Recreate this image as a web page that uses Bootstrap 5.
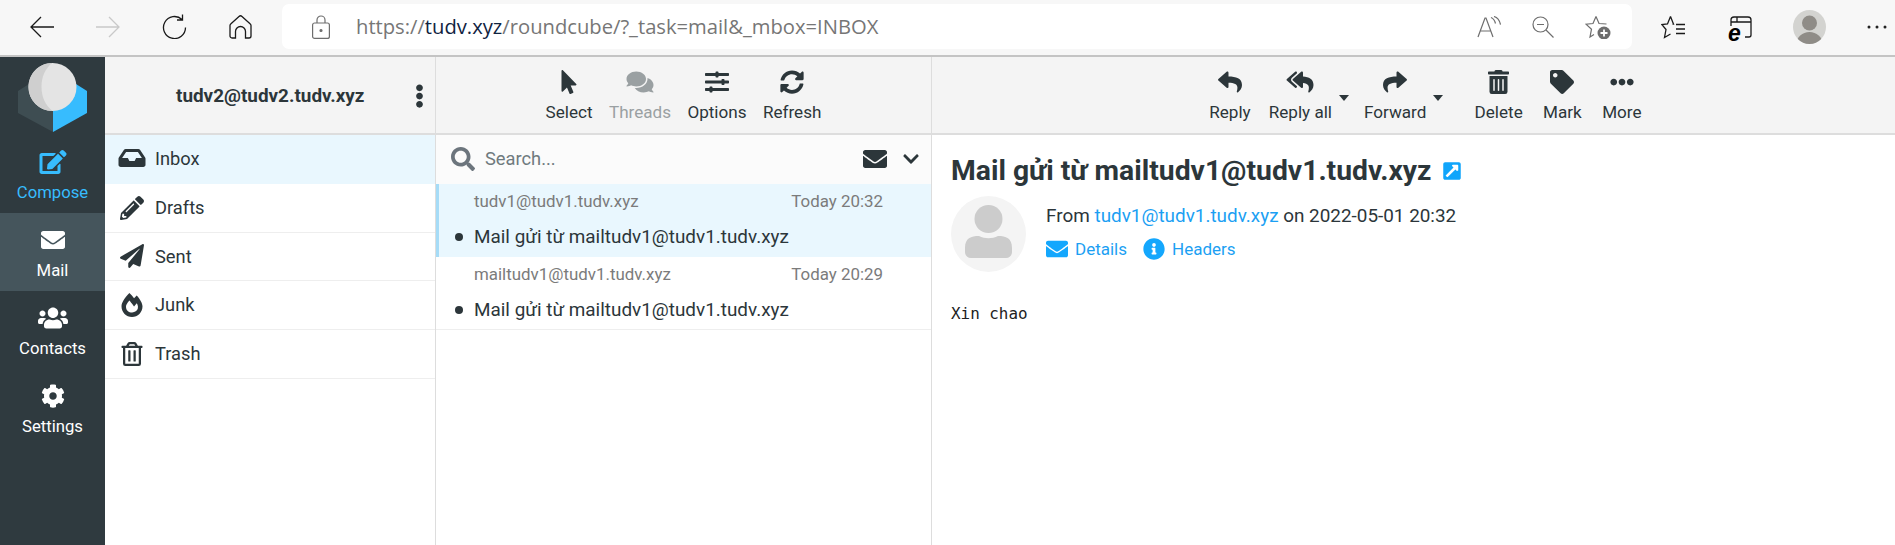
<!DOCTYPE html>
<html lang="en">
<head>
<meta charset="UTF-8">
<title>Roundcube Webmail :: Mail gửi từ mailtudv1@tudv1.tudv.xyz</title>
<link href="https://cdn.jsdelivr.net/npm/bootstrap@5.3.2/dist/css/bootstrap.min.css" rel="stylesheet">
<style>
    html, body { height: 100%; }
    body { font-family: Roboto, sans-serif; font-size: 18.3px; color: #2c363a; background: #fff; overflow: hidden; }
    svg { fill: currentColor; display: block; }

    /* browser chrome */
    .chrome { height: 57px; background: #f7f7f7; border-bottom: 2px solid #c4c4c4; padding: 4px 0 0 9px; flex: none; }
    .chrome-btn { position: relative; width: 66px; height: 45px; color: #1a1a1a; flex-shrink: 0; }
    .chrome-btn svg { fill: none; stroke: currentColor; stroke-width: 1.3; }
    .chrome-btn.off { color: #c9c9c9; }
    .addr { width: 1350px; height: 45px; background: #fff; border-radius: 7px; margin-left: 9px; color: #6e6e6e; flex-shrink: 0; }
    .addr svg { fill: none; stroke: currentColor; stroke-width: 1.2; }
    .addr-lock { margin-left: 30px; flex-shrink: 0; }
    .addr-text { font-family: "Open Sans", sans-serif; font-size: 20.2px; margin-left: 26px; color: #767676; white-space: nowrap; }
    .addr-text b { font-weight: 400; color: #10233f; }
    .addr-end { gap: 31px; padding-right: 21px; }
    .chrome-tools { height: 45px; margin-left: 7px; flex-shrink: 0; }
    .chrome-tools .chrome-btn { width: 68px; }
    .ie-letter { position: absolute; left: 21px; top: 18px; font: italic 700 23px/1 "Liberation Sans", sans-serif; color: #000; }
    .chrome-user { width: 33px; height: 34px; border-radius: 50%; background: #d3d3d0; overflow: hidden; }

    /* left menu */
    .side { width: 105px; flex: none; background: #2f3a3f; color: #fff; }
    .side-logo { height: 78px; padding: 6px 0 0 18px; }
    .side-item { height: 78px; padding-top: 3px; font-size: 16.7px; color: #fff; text-decoration: none; line-height: 1; }
    .side-item svg { margin-bottom: 11px; }
    .side-item.blue { color: #37bcfe; }
    .side-item.on { background: #45555c; }

    /* columns */
    .col-folders { width: 331px; flex: none; border-right: 1px solid #ddd; }
    .col-list { width: 496px; flex: none; border-right: 1px solid #ddd; }
    .col-mail { flex: 1; min-width: 0; }
    .head-bar { height: 78px; background: #f4f4f4; border-bottom: 2px solid #ddd; flex: none; padding-top: 2px; }

    .account { font-weight: 700; font-size: 18.9px; padding-left: 71px; }
    .dots { margin-left: 51px; }
    .folder-row { height: 48.75px; padding-left: 13px; border-bottom: 1px solid #eee; }
    .folder-row svg { width: 28px; margin-right: 9px; flex: none; }
    .folder-row.on { background: #e9f7fe; border-bottom: 0; padding-bottom: 2px; }

    .tool-btn { padding: 0 9px; font-size: 17.1px; line-height: 1; color: #2c363a; position: relative; }
    .tool-btn svg { height: 24px; margin-bottom: 10px; }
    .tool-btn.off { color: #9aa0a2; }
    .tool-btn.split { padding-right: 23px; }
    .tool-btn.wide { padding: 0 10.2px; }
    .tool-caret { position: absolute; right: 6px; top: 25px; border: 5.5px solid transparent; border-top: 6px solid #2c363a; border-bottom: 0; }
    .list-tools .tool-btn { padding: 0 8.2px; }
    .mail-tools { padding-left: 25px; }
    .tool-sep { width: 15px; }

    .search-row { height: 49px; background: #fbfbfb; padding: 0 12px 2px 15px; color: #2c363a; }
    .search-row input { border: 0; background: transparent; padding: 0; margin-left: 10px; font-size: 18.3px; flex: 1; outline: 0; min-width: 0; }
    .search-row input::placeholder { color: #6f7a7e; opacity: 1; }
    .msg-row { height: 73px; border-bottom: 1px solid #eee; padding: 0 48px 0 38px; position: relative; }
    .msg-row.on { background: #e9f7fe; border-bottom: 0; box-shadow: inset 3px 0 0 #a6dcf7; }
    .msg-top { font-size: 16.9px; color: #7b7b7b; padding-top: 7px; line-height: 20px; }
    .msg-subject { font-size: 18.9px; padding-top: 14px; line-height: 23px; color: #2c363a; }
    .msg-dot { position: absolute; left: 19px; top: 49px; width: 8px; height: 8px; border-radius: 50%; background: #2c363a; }

    .mail-body { padding: 19px 19px; }
    .mail-title { font-size: 28.3px; font-weight: 700; line-height: 34px; margin: 0; color: #2c363a; }
    .mail-title svg { width: 18px; color: #10a5fb; margin-left: 11px; }
    .sender-photo { width: 75px; height: 76px; border-radius: 50%; background: #f4f4f4; overflow: hidden; color: #ccc; flex: none; }
    .sender-info { padding-left: 20px; padding-top: 8px; font-size: 18.9px; line-height: 24px; }
    .blue-link { color: #1c9ff3; text-decoration: none; }
    .mail-links { margin-top: 9px; font-size: 17px; }
    .mail-links svg { margin-right: 7px; color: #14a7fd; }
    .mail-text { font-family: "DejaVu Sans Mono", monospace; font-size: 15.9px; margin-top: 32px; line-height: 20px; color: #222; }
</style>
</head>
<body class="d-flex flex-column">

<svg width="0" height="0" class="position-absolute">
    <symbol id="i-envelope" viewBox="0 0 512 512"><path d="M502.3 190.8c3.9-3.1 9.7-.2 9.7 4.7V400c0 26.5-21.5 48-48 48H48c-26.5 0-48-21.5-48-48V195.6c0-5 5.7-7.8 9.7-4.7 22.4 17.4 52.1 39.5 154.1 113.6 21.1 15.4 56.7 47.8 92.2 47.6 35.7.3 72-32.8 92.3-47.6 102-74.1 131.6-96.3 154-113.7zM256 320c23.2.4 56.6-29.2 73.4-41.4 132.7-96.3 142.8-104.7 173.4-128.7 5.8-4.5 9.2-11.5 9.2-18.9v-19c0-26.5-21.5-48-48-48H48C21.5 64 0 85.5 0 112v19c0 7.4 3.4 14.3 9.2 18.9 30.6 23.9 40.7 32.4 173.4 128.7 16.8 12.2 50.2 41.8 73.4 41.4z"/></symbol>
    <symbol id="i-reply" viewBox="0 0 512 512"><path d="M8.309 189.836L184.313 37.851C199.719 24.546 224 35.347 224 56.015v80.053c160.629 1.839 288 34.032 288 186.258 0 61.441-39.581 122.309-83.333 154.132-13.653 9.931-33.111-2.533-28.077-18.631 45.344-145.012-21.507-183.51-176.59-185.742V360c0 20.7-24.3 31.453-39.687 18.164l-176.004-152c-11.071-9.562-11.086-26.753 0-36.328z"/></symbol>
    <symbol id="i-reply-all" viewBox="0 0 576 512"><path d="M136.309 189.836L312.313 37.851C327.72 24.546 352 35.348 352 56.015v82.763c129.182 10.231 224 52.212 224 183.548 0 61.441-39.582 122.309-83.333 154.132-13.653 9.931-33.111-2.533-28.077-18.631 38.512-123.162-3.922-169.482-112.59-182.015V360c0 20.7-24.3 31.453-39.687 18.164l-176.004-152c-11.071-9.561-11.086-26.753 0-36.328zm-128 36.328L184.313 378.15C199.7 391.439 224 380.687 224 359.986v-15.818l-108.606-93.785A55.96 55.96 0 0 1 96 207.998a55.953 55.953 0 0 1 19.393-42.38L224 71.832V56.015c0-20.667-24.28-31.469-39.687-18.164L8.309 189.836c-11.086 9.575-11.071 26.767 0 36.328z"/></symbol>
    <symbol id="i-share" viewBox="0 0 512 512"><path d="M503.691 189.836L327.687 37.851C312.281 24.546 288 35.347 288 56.015v80.053C127.371 137.907 0 170.1 0 322.326c0 61.441 39.581 122.309 83.333 154.132 13.653 9.931 33.111-2.533 28.077-18.631C66.066 312.814 132.917 274.316 288 272.085V360c0 20.7 24.3 31.453 39.687 18.164l176.004-152c11.071-9.562 11.086-26.753 0-36.328z"/></symbol>
    <symbol id="i-trash" viewBox="0 0 448 512"><path d="M32 464a48 48 0 0 0 48 48h288a48 48 0 0 0 48-48V128H32zm272-256a16 16 0 0 1 32 0v224a16 16 0 0 1-32 0zm-96 0a16 16 0 0 1 32 0v224a16 16 0 0 1-32 0zm-96 0a16 16 0 0 1 32 0v224a16 16 0 0 1-32 0zM432 32H312l-9.400-18.700A24 24 0 0 0 281.100 0H166.800a23.720 23.720 0 0 0-21.400 13.300L136 32H16A16 16 0 0 0 0 48v32a16 16 0 0 0 16 16h416a16 16 0 0 0 16-16V48a16 16 0 0 0-16-16z"/></symbol>
    <symbol id="i-tag" viewBox="0 0 512 512"><path d="M0 252.118V48C0 21.49 21.49 0 48 0h204.118a48 48 0 0 1 33.941 14.059l211.882 211.882c18.745 18.745 18.745 49.137 0 67.882L293.823 497.941c-18.745 18.745-49.137 18.745-67.882 0L14.059 286.059A48 48 0 0 1 0 252.118zM112 64c-26.51 0-48 21.49-48 48s21.49 48 48 48 48-21.49 48-48-21.49-48-48-48z"/></symbol>
    <symbol id="i-more" viewBox="0 0 512 512"><path d="M328 256c0 39.8-32.2 72-72 72s-72-32.2-72-72 32.2-72 72-72 72 32.2 72 72zm104-72c-39.8 0-72 32.2-72 72s32.2 72 72 72 72-32.2 72-72-32.2-72-72-72zm-352 0c-39.8 0-72 32.2-72 72s32.2 72 72 72 72-32.2 72-72-32.2-72-72-72z"/></symbol>
    <symbol id="i-dots" viewBox="0 0 192 512"><path d="M96 184c39.8 0 72 32.2 72 72s-32.2 72-72 72-72-32.2-72-72 32.2-72 72-72zM24 80c0 39.8 32.2 72 72 72s72-32.2 72-72S135.8 8 96 8 24 40.2 24 80zm0 352c0 39.8 32.2 72 72 72s72-32.2 72-72-32.2-72-72-72-72 32.2-72 72z"/></symbol>
    <symbol id="i-search" viewBox="0 0 512 512"><path d="M505 442.7L405.3 343c-4.5-4.5-10.6-7-17-7H372c27.6-35.3 44-79.7 44-128C416 93.1 322.9 0 208 0S0 93.1 0 208s93.1 208 208 208c48.3 0 92.7-16.4 128-44v16.3c0 6.4 2.5 12.5 7 17l99.7 99.7c9.4 9.4 24.6 9.4 33.9 0l28.3-28.3c9.4-9.4 9.4-24.6.1-34zM208 336c-70.7 0-128-57.2-128-128 0-70.7 57.2-128 128-128 70.7 0 128 57.2 128 128 0 70.7-57.2 128-128 128z"/></symbol>
    <symbol id="i-chevron" viewBox="0 0 448 512"><path d="M207.029 381.476L12.686 187.132c-9.373-9.373-9.373-24.569 0-33.941l22.667-22.667c9.357-9.357 24.522-9.375 33.901-.04L224 284.505l154.745-154.021c9.379-9.335 24.544-9.317 33.901.04l22.667 22.667c9.373 9.373 9.373 24.569 0 33.941L240.971 381.476c-9.373 9.372-24.569 9.372-33.942 0z"/></symbol>
    <symbol id="i-pointer" viewBox="0 0 320 512"><path d="M302.189 329.126H196.105l55.831 135.993c3.889 9.428-.555 19.999-9.444 23.999l-49.165 21.427c-9.165 4-19.443-.571-23.332-9.714l-53.053-129.136-86.664 89.138C18.729 472.71 0 463.554 0 447.977V18.299C0 1.899 19.921-6.096 30.277 5.443l284.412 292.542c11.472 11.179 3.007 31.141-12.5 31.141z"/></symbol>
    <symbol id="i-comments" viewBox="0 0 576 512"><path d="M416 192c0-88.4-93.1-160-208-160S0 103.6 0 192c0 34.3 14.1 65.9 38 92-13.4 30.2-35.5 54.2-35.8 54.5-2.2 2.3-2.8 5.7-1.5 8.7S4.8 352 8 352c36.6 0 66.9-12.3 88.7-25 32.2 15.7 70.3 25 111.3 25 114.9 0 208-71.6 208-160zm122 220c23.9-26 38-57.7 38-92 0-66.9-53.5-124.2-129.3-148.1.9 6.6 1.3 13.3 1.3 20.1 0 105.9-107.7 192-240 192-10.8 0-21.3-.8-31.7-1.9C207.8 439.6 281.8 480 368 480c41 0 79.1-9.2 111.3-25 21.8 12.7 52.1 25 88.7 25 3.2 0 6.1-1.9 7.3-4.8 1.3-2.9.7-6.3-1.5-8.7-.3-.3-22.4-24.2-35.8-54.5z"/></symbol>
    <symbol id="i-sliders" viewBox="0 0 512 512"><path d="M496 384H160v-16c0-8.8-7.2-16-16-16h-32c-8.8 0-16 7.2-16 16v16H16c-8.8 0-16 7.2-16 16v32c0 8.8 7.2 16 16 16h80v16c0 8.8 7.2 16 16 16h32c8.8 0 16-7.2 16-16v-16h336c8.8 0 16-7.2 16-16v-32c0-8.8-7.2-16-16-16zm0-160h-80v-16c0-8.8-7.2-16-16-16h-32c-8.8 0-16 7.2-16 16v16H16c-8.8 0-16 7.2-16 16v32c0 8.8 7.2 16 16 16h336v16c0 8.8 7.2 16 16 16h32c8.8 0 16-7.2 16-16v-16h80c8.8 0 16-7.2 16-16v-32c0-8.8-7.2-16-16-16zm0-160H288V48c0-8.8-7.2-16-16-16h-32c-8.8 0-16 7.2-16 16v16H16C7.2 64 0 71.2 0 80v32c0 8.8 7.2 16 16 16h208v16c0 8.8 7.2 16 16 16h32c8.8 0 16-7.2 16-16v-16h208c8.8 0 16-7.2 16-16V80c0-8.8-7.2-16-16-16z"/></symbol>
    <symbol id="i-sync" viewBox="0 0 512 512"><path d="M370.72 133.28C339.458 104.008 298.888 87.962 255.848 88c-77.458.068-144.328 53.178-162.791 126.85-1.344 5.363-6.122 9.15-11.651 9.15H24.103c-7.498 0-13.194-6.807-11.807-14.176C33.933 94.924 134.813 8 256 8c66.448 0 126.791 26.136 171.315 68.685L463.03 40.97C478.149 25.851 504 36.559 504 57.941V192c0 13.255-10.745 24-24 24H345.941c-21.382 0-32.09-25.851-16.971-40.971l41.75-41.749zM32 296h134.059c21.382 0 32.09 25.851 16.971 40.971l-41.75 41.75c31.262 29.273 71.835 45.319 114.876 45.28 77.418-.07 144.315-53.144 162.787-126.849 1.344-5.363 6.122-9.15 11.651-9.15h57.304c7.498 0 13.194 6.807 11.807 14.176C478.067 417.076 377.187 504 256 504c-66.448 0-126.791-26.136-171.315-68.685L48.97 471.03C33.851 486.149 8 475.441 8 454.059V320c0-13.255 10.745-24 24-24z"/></symbol>
    <symbol id="i-users" viewBox="0 0 640 512"><path d="M96 224c35.3 0 64-28.7 64-64s-28.7-64-64-64-64 28.7-64 64 28.7 64 64 64zm448 0c35.3 0 64-28.7 64-64s-28.7-64-64-64-64 28.7-64 64 28.7 64 64 64zm32 32h-64c-17.6 0-33.5 7.1-45.1 18.6 40.3 22.1 68.9 62 75.1 109.4h66c17.7 0 32-14.3 32-32v-32c0-35.3-28.7-64-64-64zm-256 0c61.9 0 112-50.1 112-112S381.9 32 320 32 208 82.1 208 144s50.1 112 112 112zm76.8 32h-8.3c-20.8 10-43.9 16-68.5 16s-47.6-6-68.5-16h-8.3C179.6 288 128 339.6 128 403.2V432c0 26.5 21.5 48 48 48h288c26.5 0 48-21.5 48-48v-28.8c0-63.6-51.6-115.2-115.2-115.2zm-223.7-13.4C161.5 263.1 145.6 256 128 256H64c-35.3 0-64 28.7-64 64v32c0 17.7 14.3 32 32 32h65.9c6.3-47.4 34.9-87.3 75.2-109.4z"/></symbol>
    <symbol id="i-cog" viewBox="0 0 512 512"><path d="M487.4 315.7l-42.6-24.6c4.3-23.2 4.3-47 0-70.2l42.6-24.6c4.9-2.8 7.1-8.6 5.5-14-11.1-35.6-30-67.8-54.7-94.6-3.8-4.1-10-5.1-14.8-2.3L380.8 110c-17.9-15.4-38.5-27.3-60.8-35.1V25.8c0-5.6-3.9-10.5-9.4-11.7-36.7-8.2-74.3-7.8-109.2 0-5.5 1.2-9.4 6.1-9.4 11.7V75c-22.2 7.9-42.8 19.8-60.8 35.1L88.7 85.5c-4.9-2.8-11-1.9-14.8 2.3-24.7 26.7-43.6 58.9-54.7 94.6-1.7 5.4.6 11.2 5.5 14L67.3 221c-4.3 23.2-4.3 47 0 70.2l-42.6 24.6c-4.9 2.8-7.1 8.6-5.5 14 11.1 35.6 30 67.8 54.7 94.6 3.8 4.1 10 5.1 14.8 2.3l42.6-24.6c17.9 15.4 38.5 27.3 60.8 35.1v49.2c0 5.6 3.9 10.5 9.4 11.7 36.7 8.2 74.3 7.8 109.2 0 5.5-1.2 9.4-6.1 9.4-11.7v-49.2c22.2-7.9 42.8-19.8 60.8-35.1l42.6 24.6c4.9 2.8 11 1.9 14.8-2.3 24.7-26.7 43.6-58.9 54.7-94.6 1.5-5.5-.7-11.3-5.6-14.1zM256 336c-44.1 0-80-35.9-80-80s35.9-80 80-80 80 35.9 80 80-35.9 80-80 80z"/></symbol>
    <symbol id="i-edit" viewBox="0 0 576 512"><path d="M402.6 83.2l90.2 90.2c3.8 3.8 3.8 10 0 13.8L274.4 405.6l-92.8 10.3c-12.4 1.4-22.9-9.1-21.5-21.5l10.3-92.8L388.8 83.2c3.8-3.8 10-3.8 13.8 0zm162-22.9l-48.8-48.8c-15.2-15.2-39.9-15.2-55.2 0l-35.4 35.4c-3.8 3.8-3.8 10 0 13.8l90.2 90.2c3.8 3.8 10 3.8 13.8 0l35.4-35.4c15.2-15.3 15.2-40 0-55.2zM384 346.2V448H64V128h229.8c3.2 0 6.2-1.3 8.5-3.5l40-40c7.6-7.6 2.2-20.5-8.5-20.5H48C21.5 64 0 85.5 0 112v352c0 26.5 21.5 48 48 48h352c26.5 0 48-21.5 48-48V306.2c0-10.7-12.9-16-20.5-8.5l-40 40c-2.2 2.3-3.5 5.3-3.5 8.5z"/></symbol>
    <symbol id="i-inbox" viewBox="0 0 576 512"><path d="M567.938 243.908L462.25 85.374A48.003 48.003 0 0 0 422.311 64H153.689a48 48 0 0 0-39.938 21.374L8.062 243.908A47.994 47.994 0 0 0 0 270.533V400c0 26.51 21.49 48 48 48h480c26.51 0 48-21.49 48-48V270.533a47.994 47.994 0 0 0-8.062-26.625zM162.252 128h251.497l85.333 128H376l-32 64H232l-32-64H76.918l85.334-128z"/></symbol>
    <symbol id="i-pencil" viewBox="0 0 512 512"><path d="M497.9 142.1l-46.1 46.1c-4.7 4.7-12.3 4.7-17 0l-111-111c-4.7-4.7-4.7-12.3 0-17l46.1-46.1c18.7-18.7 49.1-18.7 67.9 0l60.1 60.1c18.8 18.7 18.8 49.1 0 67.9zM284.2 99.8L21.6 362.4.4 483.9c-2.9 16.4 11.4 30.6 27.8 27.8l121.5-21.3 262.6-262.6c4.7-4.7 4.7-12.3 0-17l-111-111c-4.8-4.7-12.4-4.7-17.1 0zM124.1 339.9c-5.5-5.5-5.5-14.3 0-19.8l154-154c5.5-5.5 14.3-5.5 19.8 0s5.5 14.3 0 19.8l-154 154c-5.5 5.5-14.3 5.5-19.8 0zM88 424h48v36.3l-64.5 11.3-31.1-31.1L51.7 376H88v48z"/></symbol>
    <symbol id="i-plane" viewBox="0 0 512 512"><path d="M476 3.2L12.5 270.6c-18.1 10.4-15.8 35.6 2.2 43.2L121 358.4l287.3-253.2c5.5-4.9 13.3 2.6 8.6 8.3L176 407v80.5c0 23.6 28.5 32.9 42.5 15.8L282 426l124.6 52.2c14.2 6 30.4-2.9 33-18.2l72-432C515 7.8 493.3-6.8 476 3.2z"/></symbol>
    <symbol id="i-fire" viewBox="0 0 448 512"><path d="M323.56 51.2c-20.8 19.3-39.58 39.59-56.22 59.97C240.08 73.62 206.28 35.53 168 0 69.74 91.17 0 209.96 0 281.6 0 408.85 100.29 512 224 512s224-103.15 224-230.4c0-53.27-51.98-163.14-124.44-230.4zm-19.47 340.65C282.43 407.01 255.72 416 226.86 416 154.71 416 96 368.26 96 290.75c0-38.61 24.31-72.63 72.79-130.75 6.93 7.98 98.83 125.34 98.83 125.34l58.63-66.88c4.14 6.85 7.91 13.55 11.27 19.97 27.35 52.19 15.81 118.97-33.43 153.42z"/></symbol>
    <symbol id="i-trash-o" viewBox="0 0 448 512"><path d="M268 416h24a12 12 0 0 0 12-12V188a12 12 0 0 0-12-12h-24a12 12 0 0 0-12 12v216a12 12 0 0 0 12 12zM432 80h-82.41l-34-56.7A48 48 0 0 0 274.41 0H173.59a48 48 0 0 0-41.16 23.3L98.41 80H16A16 16 0 0 0 0 96v16a16 16 0 0 0 16 16h16v336a48 48 0 0 0 48 48h288a48 48 0 0 0 48-48V128h16a16 16 0 0 0 16-16V96a16 16 0 0 0-16-16zM171.84 50.91A6 6 0 0 1 177 48h94a6 6 0 0 1 5.15 2.91L293.61 80H154.39zM368 464H80V128h288zm-212-48h24a12 12 0 0 0 12-12V188a12 12 0 0 0-12-12h-24a12 12 0 0 0-12 12v216a12 12 0 0 0 12 12z"/></symbol>
    <symbol id="i-info" viewBox="0 0 512 512"><path d="M256 8C119.043 8 8 119.083 8 256c0 136.997 111.043 248 248 248s248-111.003 248-248C504 119.083 392.957 8 256 8zm0 110c23.196 0 42 18.804 42 42s-18.804 42-42 42-42-18.804-42-42 18.804-42 42-42zm56 254c0 6.627-5.373 12-12 12h-88c-6.627 0-12-5.373-12-12v-24c0-6.627 5.373-12 12-12h12v-64h-12c-6.627 0-12-5.373-12-12v-24c0-6.627 5.373-12 12-12h64c6.627 0 12 5.373 12 12v100h12c6.627 0 12 5.373 12 12v24z"/></symbol>
    <symbol id="i-external" viewBox="0 0 448 512"><path d="M448 80v352c0 26.51-21.49 48-48 48H48c-26.51 0-48-21.49-48-48V80c0-26.51 21.49-48 48-48h352c26.51 0 48 21.49 48 48zm-88 16H248.029c-21.313 0-32.08 25.861-16.971 40.971l31.984 31.987L67.515 364.485c-4.686 4.686-4.686 12.284 0 16.971l31.029 31.029c4.687 4.686 12.285 4.686 16.971 0l195.526-195.526 31.988 31.991C357.058 263.977 384 253.425 384 231.979V120c0-13.255-10.745-24-24-24z"/></symbol>
</svg>

<!-- browser toolbar -->
<div class="chrome d-flex align-items-start">
    <div class="chrome-btn d-flex align-items-center justify-content-center">
        <svg width="24" height="22" viewBox="0 0 24 22"><path d="M24 11H1M11 1 1 11l10 10"/></svg>
    </div>
    <div class="chrome-btn off d-flex align-items-center justify-content-center">
        <svg width="24" height="22" viewBox="0 0 24 22"><path d="M0 11h23M13 1l10 10-10 10"/></svg>
    </div>
    <div class="chrome-btn d-flex align-items-center justify-content-center">
        <svg width="25" height="25" viewBox="0 0 25 25"><path d="M20 5.500A11 11 0 1 0 23.500 13.500M20.500 .5v5.500H15"/></svg>
    </div>
    <div class="chrome-btn d-flex align-items-center justify-content-center">
        <svg width="23" height="24" viewBox="0 0 23 24"><path d="M3 23a2 2 0 0 1-2-2V10.500a2 2 0 0 1 .7-1.500L10 1.500a2.200 2.200 0 0 1 3 0L21.300 9a2 2 0 0 1 .7 1.500V21a2 2 0 0 1-2 2h-3.500v-6.500a5 5 0 0 0-10 0V23z"/></svg>
    </div>
    <div class="addr d-flex align-items-center">
        <svg class="addr-lock" width="18" height="24" viewBox="0 0 18 24"><rect x=".6" y="8" width="16.800" height="15.400" rx="2"/><path d="M5 8V5a4 4 0 0 1 8 0v3"/><circle cx="9" cy="15.500" r="1" fill="currentColor"/></svg>
        <div class="addr-text">https://<b>tudv.xyz</b>/roundcube/?_task=mail&amp;_mbox=INBOX</div>
        <div class="addr-end d-flex align-items-center ms-auto">
            <svg width="24" height="22" viewBox="0 0 24 22"><path d="M1 21 8 2h1l7 19M3.500 15h10M14 1.500q3.500 1.500 4.500 6M17 .5q5 1.500 6.500 8"/></svg>
            <svg width="22" height="22" viewBox="0 0 22 22"><circle cx="8.500" cy="8.500" r="7.500"/><path d="M5 8.500h7M14 14l7.500 7.500"/></svg>
            <svg width="26" height="24" viewBox="0 0 26 24"><path d="M11 1.500l3 7 7.500.5M11 1.500 8 8.500l-7 .7 5.500 5L5 22l4-2.500"/><circle cx="19" cy="18" r="6.500" fill="currentColor" stroke="none"/><path d="M19 14.500v7M15.500 18h7" stroke="#fff" stroke-width="1.800"/></svg>
        </div>
    </div>
    <div class="chrome-tools d-flex align-items-center">
        <div class="chrome-btn d-flex align-items-center justify-content-center">
            <svg width="25" height="24" viewBox="0 0 25 24"><path d="M9.500 1.500l3 7.500h-1M9.500 1.500 6.500 9 .8 9.500 5 14.500 3.500 22.500 9.500 19M15 9.500h9M15 14h9M15 18.500h9"/></svg>
        </div>
        <div class="chrome-btn d-flex align-items-center justify-content-center">
            <svg width="22" height="22" viewBox="0 0 22 22"><path d="M1 10V4a3 3 0 0 1 3-3h14a3 3 0 0 1 3 3v15a2 2 0 0 1-2 2h-4M1 6h20M7 1v5"/></svg>
            <span class="ie-letter">e</span>
        </div>
        <div class="chrome-btn d-flex align-items-center justify-content-center">
            <div class="chrome-user">
                <svg width="33" height="34" viewBox="0 0 33 34"><circle cx="16.500" cy="13" r="7.500" fill="#8f8c87" stroke="none"/><ellipse cx="16.500" cy="34" rx="13" ry="12" fill="#8f8c87" stroke="none"/></svg>
            </div>
        </div>
        <div class="chrome-btn d-flex align-items-center justify-content-center">
            <svg width="20" height="4" viewBox="0 0 20 4"><circle cx="2" cy="2" r="1.500" fill="#222" stroke="none"/><circle cx="10" cy="2" r="1.500" fill="#222" stroke="none"/><circle cx="18" cy="2" r="1.500" fill="#222" stroke="none"/></svg>
        </div>
    </div>
</div>

<div class="d-flex flex-grow-1" style="min-height:0">

    <!-- app menu -->
    <div class="side d-flex flex-column">
        <div class="side-logo">
            <svg width="70" height="70" viewBox="0 0 70 70">
                <path d="M0 28 11 21 35 47v22L0 50z" fill="#3e4d52"/>
                <path d="M58 21 69 28v22L35 69V47z" fill="#37bcfe"/>
                <circle cx="34.500" cy="24" r="24" fill="#e4e4e4"/>
                <path d="M34 0C20.700 0 10.500 11 10.500 24S21 47.700 34.500 48C27 42 23.500 33 23.500 24 23.500 14 27 6 34 0z" fill="#cfcfcf"/>
            </svg>
        </div>
        <a class="side-item blue d-flex flex-column align-items-center justify-content-center" href="#">
            <svg width="28" height="24"><use href="#i-edit"/></svg>Compose
        </a>
        <a class="side-item on d-flex flex-column align-items-center justify-content-center" href="#">
            <svg width="26" height="24"><use href="#i-envelope"/></svg>Mail
        </a>
        <a class="side-item d-flex flex-column align-items-center justify-content-center" href="#">
            <svg width="30" height="24"><use href="#i-users"/></svg>Contacts
        </a>
        <a class="side-item d-flex flex-column align-items-center justify-content-center" href="#">
            <svg width="24" height="24"><use href="#i-cog"/></svg>Settings
        </a>
    </div>

    <!-- folders -->
    <div class="col-folders d-flex flex-column">
        <div class="head-bar account d-flex align-items-center">
            tudv2@tudv2.tudv.xyz
            <svg class="dots" width="9" height="24"><use href="#i-dots"/></svg>
        </div>
        <div class="folder-row on d-flex align-items-center"><svg height="24"><use href="#i-inbox"/></svg>Inbox</div>
        <div class="folder-row d-flex align-items-center"><svg height="24"><use href="#i-pencil"/></svg>Drafts</div>
        <div class="folder-row d-flex align-items-center"><svg height="24"><use href="#i-plane"/></svg>Sent</div>
        <div class="folder-row d-flex align-items-center"><svg height="24"><use href="#i-fire"/></svg>Junk</div>
        <div class="folder-row d-flex align-items-center"><svg height="24"><use href="#i-trash-o"/></svg>Trash</div>
    </div>

    <!-- message list -->
    <div class="col-list d-flex flex-column">
        <div class="head-bar list-tools d-flex justify-content-center align-items-center">
            <div class="tool-btn d-flex flex-column align-items-center"><svg width="16"><use href="#i-pointer"/></svg>Select</div>
            <div class="tool-btn off d-flex flex-column align-items-center"><svg width="28"><use href="#i-comments"/></svg>Threads</div>
            <div class="tool-btn d-flex flex-column align-items-center"><svg width="24"><use href="#i-sliders"/></svg>Options</div>
            <div class="tool-btn d-flex flex-column align-items-center"><svg width="24"><use href="#i-sync"/></svg>Refresh</div>
        </div>
        <div class="search-row d-flex align-items-center">
            <svg class="text-secondary" width="24" height="24"><use href="#i-search"/></svg>
            <input type="text" placeholder="Search...">
            <svg width="24" height="24"><use href="#i-envelope"/></svg>
            <svg class="ms-3" width="16" height="18"><use href="#i-chevron"/></svg>
        </div>
        <div class="msg-row on">
            <div class="msg-top d-flex justify-content-between"><span>tudv1@tudv1.tudv.xyz</span><span>Today 20:32</span></div>
            <div class="msg-subject">Mail gửi từ mailtudv1@tudv1.tudv.xyz</div>
            <span class="msg-dot"></span>
        </div>
        <div class="msg-row">
            <div class="msg-top d-flex justify-content-between"><span>mailtudv1@tudv1.tudv.xyz</span><span>Today 20:29</span></div>
            <div class="msg-subject">Mail gửi từ mailtudv1@tudv1.tudv.xyz</div>
            <span class="msg-dot"></span>
        </div>
    </div>

    <!-- message -->
    <div class="col-mail d-flex flex-column">
        <div class="head-bar mail-tools d-flex justify-content-center align-items-center">
            <div class="tool-btn d-flex flex-column align-items-center"><svg width="24"><use href="#i-reply"/></svg>Reply</div>
            <div class="tool-btn split d-flex flex-column align-items-center"><svg width="28"><use href="#i-reply-all"/></svg>Reply all<span class="tool-caret"></span></div>
            <div class="tool-btn split d-flex flex-column align-items-center"><svg width="24"><use href="#i-share"/></svg>Forward<span class="tool-caret"></span></div>
            <div class="tool-sep"></div>
            <div class="tool-btn wide d-flex flex-column align-items-center"><svg width="21"><use href="#i-trash"/></svg>Delete</div>
            <div class="tool-btn wide d-flex flex-column align-items-center"><svg width="24"><use href="#i-tag"/></svg>Mark</div>
            <div class="tool-btn wide d-flex flex-column align-items-center"><svg width="24"><use href="#i-more"/></svg>More</div>
        </div>
        <div class="mail-body">
            <h2 class="mail-title d-flex align-items-center">Mail gửi từ mailtudv1@tudv1.tudv.xyz <svg height="20"><use href="#i-external"/></svg></h2>
            <div class="d-flex mt-2">
                <div class="sender-photo">
                    <svg width="75" height="76" viewBox="0 0 75 76"><circle cx="37.500" cy="23" r="14"/><path d="M14 52c0-10 6-12 14-12 6 3 13 3 19 0 8 0 14 2 14 12v4c0 3-2 6-6 6H20c-4 0-6-3-6-6z"/></svg>
                </div>
                <div class="sender-info">
                    <div>From <a class="blue-link" href="#">tudv1@tudv1.tudv.xyz</a> on 2022-05-01 20:32</div>
                    <div class="mail-links d-flex align-items-center">
                        <svg width="22" height="22"><use href="#i-envelope"/></svg>
                        <a class="blue-link me-3" href="#">Details</a>
                        <svg width="22" height="22"><use href="#i-info"/></svg>
                        <a class="blue-link" href="#">Headers</a>
                    </div>
                </div>
            </div>
            <div class="mail-text">Xin chao</div>
        </div>
    </div>
</div>

<script src="https://cdn.jsdelivr.net/npm/bootstrap@5.3.2/dist/js/bootstrap.bundle.min.js"></script>
</body>
</html>
